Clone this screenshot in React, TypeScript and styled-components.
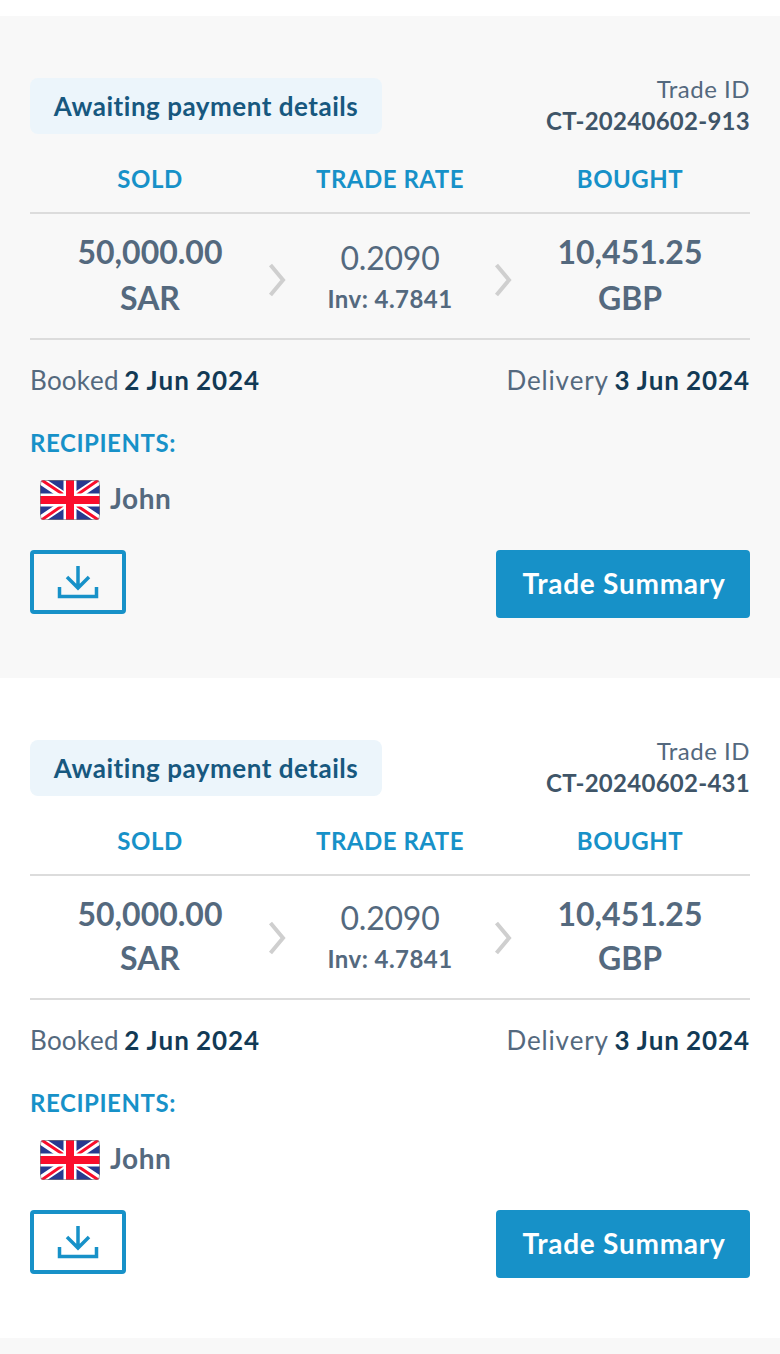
import styled, { createGlobalStyle } from "styled-components";

interface Trade {
  id: string;
  shaded: boolean;
  tall: boolean;
}

const trades: Trade[] = [
  { id: "CT-20240602-913", shaded: true, tall: true },
  { id: "CT-20240602-431", shaded: false, tall: false },
];

function Chevron({ second, tall }: { second?: boolean; tall: boolean }) {
  return (
    <ChevronIcon $second={second} $tall={tall} width="18" height="34" viewBox="0 0 18 34" fill="none">
      <path d="M2.500 2 L15 17 L2.500 32" stroke="#cfcfcf" strokeWidth="4" />
    </ChevronIcon>
  );
}

function UkFlag({ clipId }: { clipId: string }) {
  return (
    <FlagIcon width="60" height="40" viewBox="0 0 60 40">
      <defs>
        <clipPath id={clipId}>
          <rect width="60" height="40" rx="4" />
        </clipPath>
      </defs>
      <g clipPath={`url(#${clipId})`}>
        <rect width="60" height="40" fill="#283a8f" />
        <path d="M0 0 L60 40 M60 0 L0 40" stroke="#fff" strokeWidth="8" />
        <path
          d="M0 -1 L30 19 M60 41 L30 21 M60 -1 L31 19 M0 41 L29 21"
          stroke="#fb0d2b"
          strokeWidth="3"
        />
        <path d="M30 0 V40 M0 20 H60" stroke="#fff" strokeWidth="13" />
        <path d="M30 0 V40 M0 20 H60" stroke="#fb0d2b" strokeWidth="8" />
        <rect x="0.500" y="0.500" width="59" height="39" rx="3.500" fill="none" stroke="#777" strokeOpacity="0.600" />
      </g>
    </FlagIcon>
  );
}

function DownloadIcon() {
  return (
    <svg width="42" height="34" viewBox="0 0 42 34" fill="none">
      <path d="M21 1 V22 M10 12 L21 23 L32 12" stroke="#1791c8" strokeWidth="3.500" />
      <path d="M2.500 22 V31.500 H39.500 V22" stroke="#1791c8" strokeWidth="3.500" />
    </svg>
  );
}

function TradeCard({ trade }: { trade: Trade }) {
  return (
    <Card $shaded={trade.shaded}>
      <TopRow>
        <StatusBadge>Awaiting payment details</StatusBadge>
        <TradeRef>
          <TradeLabel>Trade ID</TradeLabel>
          <TradeNumber>{trade.id}</TradeNumber>
        </TradeRef>
      </TopRow>
      <HeaderRow>
        <ColumnTitle>SOLD</ColumnTitle>
        <ColumnTitle>TRADE RATE</ColumnTitle>
        <ColumnTitle>BOUGHT</ColumnTitle>
      </HeaderRow>
      <ValueRow $tall={trade.tall}>
        <Amount $tall={trade.tall}>
          <div>50,000.00</div>
          <div>SAR</div>
        </Amount>
        <Chevron tall={trade.tall} />
        <Rate $tall={trade.tall}>
          <RateValue>0.2090</RateValue>
          <RateInverse>Inv: 4.7841</RateInverse>
        </Rate>
        <Chevron second tall={trade.tall} />
        <Amount $tall={trade.tall}>
          <div>10,451.25</div>
          <div>GBP</div>
        </Amount>
      </ValueRow>
      <DateRow>
        <span>
          <DateLabel $spacing={0.15}>Booked</DateLabel> <strong>2 Jun 2024</strong>
        </span>
        <span>
          <DateLabel $spacing={0.8}>Delivery</DateLabel> <strong>3 Jun 2024</strong>
        </span>
      </DateRow>
      <RecipientsTitle>RECIPIENTS:</RecipientsTitle>
      <Recipient>
        <UkFlag clipId={`flag-${trade.id}`} />
        <RecipientName>John</RecipientName>
      </Recipient>
      <Actions>
        <DownloadButton>
          <DownloadIcon />
        </DownloadButton>
        <SummaryButton>Trade Summary</SummaryButton>
      </Actions>
    </Card>
  );
}

export default function App() {
  return (
    <>
      <GlobalStyle />
      <Page>
        {trades.map((trade) => (
          <TradeCard key={trade.id} trade={trade} />
        ))}
        <NextCard />
      </Page>
    </>
  );
}

const GlobalStyle = createGlobalStyle`
  html, body {
    margin: 0;
    padding: 0;
    background: #fff;
    font-family: Lato, "Liberation Sans", sans-serif;
  }
`;

const Page = styled.div`
  padding-top: 16px;
  height: 1354px;
  box-sizing: border-box;
  overflow: hidden;
`;

const Card = styled.section<{ $shaded: boolean }>`
  background: ${(p) => (p.$shaded ? "#f8f8f8" : "#fff")};
  padding: 62px 30px 60px;
`;

const NextCard = styled.div`
  height: 16px;
  background: #f8f8f8;
`;

const TopRow = styled.div`
  display: flex;
  justify-content: space-between;
  align-items: flex-start;
  height: 56px;
`;

const StatusBadge = styled.div`
  box-sizing: border-box;
  width: 352px;
  height: 56px;
  display: flex;
  align-items: center;
  justify-content: center;
  background: #ecf5fb;
  border-radius: 8px;
  color: #17587f;
  font-size: 26px;
  font-weight: 700;
  letter-spacing: 0.52px;
`;

const TradeRef = styled.div`
  text-align: right;
`;

const TradeLabel = styled.div`
  color: #54697e;
  font-size: 24px;
  line-height: 30px;
  letter-spacing: 0.5px;
  margin-top: -4px;
`;

const TradeNumber = styled.div`
  color: #3f5568;
  font-size: 24px;
  font-weight: 700;
  line-height: 30px;
  letter-spacing: 0.27px;
  margin-top: 2px;
`;

const HeaderRow = styled.div`
  display: grid;
  grid-template-columns: 240px 240px 240px;
  height: 80px;
  align-items: center;
  padding-top: 10px;
  box-sizing: border-box;
  border-bottom: 2px solid #dcdcdc;
`;

const ColumnTitle = styled.div`
  color: #1791c8;
  font-size: 24px;
  font-weight: 700;
  letter-spacing: 0.5px;
  text-align: center;
`;

const ValueRow = styled.div<{ $tall: boolean }>`
  display: grid;
  grid-template-columns: 240px 1fr 240px;
  position: relative;
  height: ${(p) => (p.$tall ? "124px" : "122px")};
  align-items: center;
  border-bottom: 2px solid #dcdcdc;
`;

const ChevronIcon = styled.svg<{ $second?: boolean; $tall: boolean }>`
  position: absolute;
  top: ${(p) => (p.$tall ? "49px" : "45px")};
  left: ${(p) => (p.$second ? "464px" : "238px")};
`;

const Amount = styled.div<{ $tall: boolean }>`
  color: #54697e;
  font-size: 32px;
  font-weight: 700;
  line-height: ${(p) => (p.$tall ? "46px" : "44px")};
  padding-bottom: ${(p) => (p.$tall ? "3px" : "2px")};
  text-align: center;
`;

const Rate = styled.div<{ $tall: boolean }>`
  text-align: center;
  color: #54697e;
  padding-top: ${(p) => (p.$tall ? "2px" : "0")};
`;

const RateValue = styled.div`
  font-size: 32px;
  letter-spacing: -0.2px;
  line-height: 44px;
`;

const RateInverse = styled.div`
  font-size: 24px;
  font-weight: 700;
  letter-spacing: 0.45px;
  line-height: 38px;
`;

const DateRow = styled.div`
  display: flex;
  justify-content: space-between;
  color: #54697e;
  font-size: 26px;
  font-kerning: none;
  word-spacing: -1px;
  line-height: 34px;
  padding-top: 23px;

  strong {
    color: #123a55;
    font-weight: 700;
    letter-spacing: 0.9px;
  }
`;

const DateLabel = styled.span<{ $spacing: number }>`
  letter-spacing: ${(p) => p.$spacing}px;
`;

const RecipientsTitle = styled.div`
  color: #1791c8;
  font-size: 24px;
  font-weight: 700;
  letter-spacing: 0.55px;
  line-height: 30px;
  margin-top: 31px;
`;

const Recipient = styled.div`
  display: flex;
  align-items: center;
  gap: 10px;
  padding-left: 10px;
  margin-top: 22px;
  height: 40px;
`;

const RecipientName = styled.span`
  color: #54697e;
  font-size: 28px;
  font-weight: 700;
  letter-spacing: 0.5px;
  padding-bottom: 4px;
`;

const FlagIcon = styled.svg`
  flex: none;
`;

const Actions = styled.div`
  display: flex;
  justify-content: space-between;
  align-items: flex-start;
  margin-top: 30px;
`;

const DownloadButton = styled.button`
  box-sizing: border-box;
  width: 96px;
  height: 64px;
  padding: 0;
  display: flex;
  align-items: center;
  justify-content: center;
  background: transparent;
  border: 4px solid #1791c8;
  border-radius: 4px;
`;

const SummaryButton = styled.button`
  width: 254px;
  height: 68px;
  padding: 0 0 2px 2px;
  border: 0;
  border-radius: 4px;
  background: #1791c8;
  color: #fff;
  font-family: inherit;
  font-size: 28px;
  font-weight: 700;
  letter-spacing: 0.75px;
`;
